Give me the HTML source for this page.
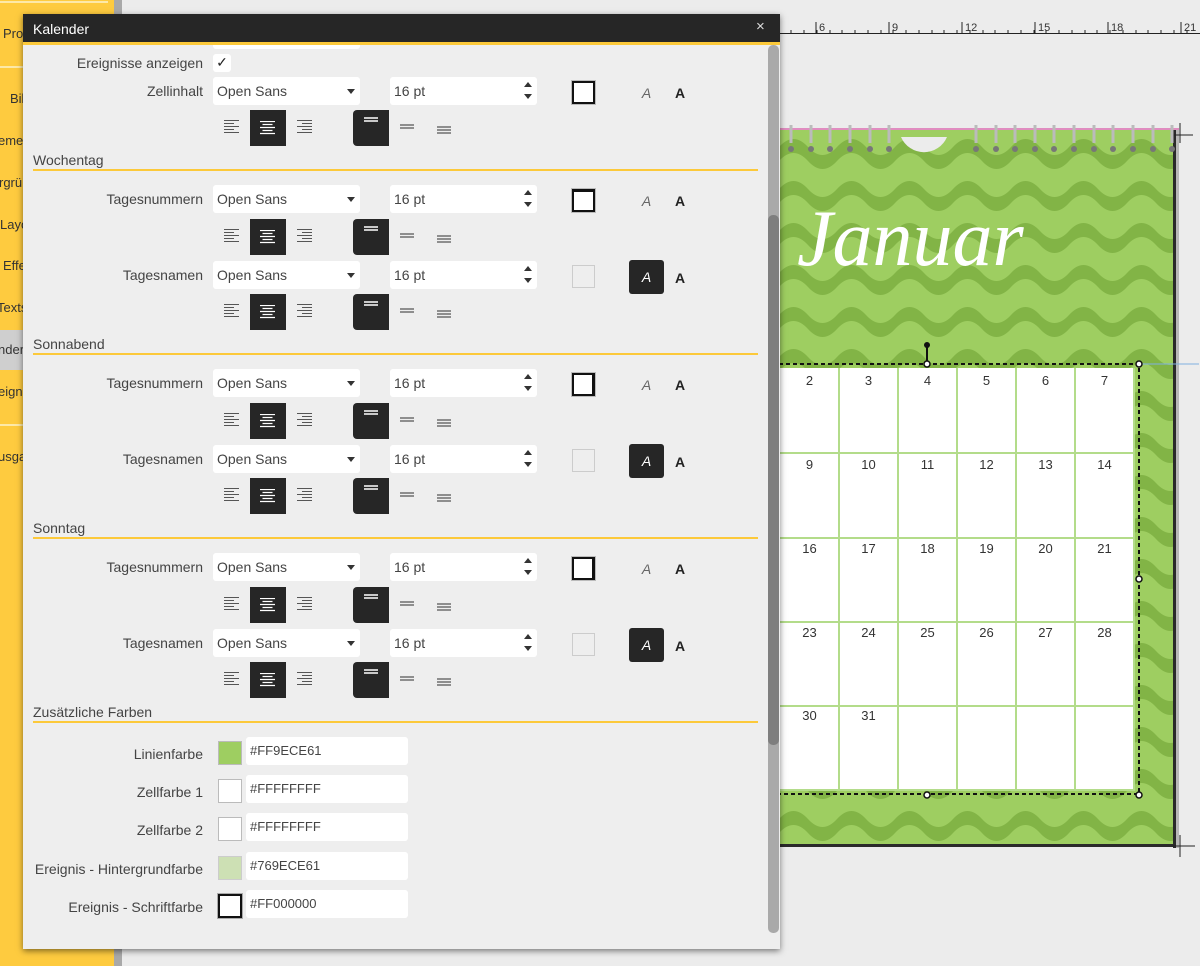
<!DOCTYPE html>
<html><head><meta charset="utf-8"><style>
*{margin:0;padding:0;box-sizing:border-box}
body{width:1200px;height:966px;background:#ececec;position:relative;overflow:hidden;font-family:"Liberation Sans",sans-serif;color:#444}
.a{position:absolute}
.side{left:0;top:0;width:114px;height:966px;background:#fecb3f}
.sb{position:absolute;font-size:13px;color:#333;white-space:nowrap}
.lbl{position:absolute;left:23px;width:180px;text-align:right;font-size:14px;color:#444}
.dd,.sz{position:absolute;height:28px;background:#fff;border-radius:3px;font-size:14px;color:#444;padding:6px 0 0 4px}
.dd{left:213px;width:147px}
.sz{left:390px;width:147px}
.dd:after{content:"";position:absolute;right:5px;top:12px;border-left:4px solid transparent;border-right:4px solid transparent;border-top:5px solid #333}
.sp{position:absolute;right:5px;width:0;height:0;border-left:4px solid transparent;border-right:4px solid transparent}
.sw{position:absolute;left:572px;width:23px;height:23px}
.sel{background:#fff;border:2px solid #111;box-shadow:0 0 0 1px #bbb}
.emp{background:#eee;border:1px solid #ccc}
.ai{position:absolute;left:629px;width:35px;height:34px;font-style:italic;font-size:14px;text-align:center;padding-top:9px;color:#666;border-radius:3px}
.ai.on{background:#262626;color:#fff}
.ab{position:absolute;left:675px;font-weight:bold;font-size:14px;color:#222}
.btn{position:absolute;width:36px;height:36px;background:#262626}
.hd{position:absolute;left:33px;font-size:14px;color:#444}
.hl{position:absolute;left:33px;width:725px;height:2px;background:#fcc93a}
.ic{position:absolute}
.cf{position:absolute;left:218px;width:24px;height:24px}
.ci{position:absolute;left:246px;width:162px;height:28px;background:#fff;border-radius:3px;font-size:13px;padding:6px 0 0 4px;color:#444}
.cell{position:absolute;font-size:13px;color:#333;text-align:center;width:59px}
</style></head><body>

<!-- sidebar -->
<div class="a side">
<div class="a" style="left:0;top:1px;width:108px;height:2px;background:#fde9a8"></div>
<div class="a" style="left:0;top:66px;width:108px;height:2px;background:#fde9a8"></div>
<div class="a" style="left:0;top:330px;width:114px;height:40px;background:#cfcfcf"></div>
<div class="a" style="left:0;top:424px;width:108px;height:2px;background:#fde9a8"></div>
<span class="sb" style="left:3px;top:26px">Projekt</span>
<span class="sb" style="left:10px;top:91px">Bilder</span>
<span class="sb" style="left:-2px;top:133px">emente</span>
<span class="sb" style="left:-1px;top:175px">rgründe</span>
<span class="sb" style="left:0;top:217px">Layouts</span>
<span class="sb" style="left:3px;top:258px">Effekte</span>
<span class="sb" style="left:-3px;top:300px">Texts</span>
<span class="sb" style="left:-2px;top:342px">nder</span>
<span class="sb" style="left:-2px;top:384px">eignisse</span>
<span class="sb" style="left:-2px;top:449px">usgabe</span>
</div>
<div class="a" style="left:114px;top:0;width:8px;height:966px;background:#a9a9a9"></div>

<!-- ruler -->
<div class="a" style="left:779px;top:33px;width:421px;height:1px;background:#222"></div>
<svg class="a" style="left:779px;top:20px" width="421" height="14">
<g stroke="#222" stroke-width="1">
<path d="M12 13v-3M25 13v-3M38 13v-3M51 13v-3M63 13v-3M76 13v-3M89 13v-3M102 13v-3M114 13v-3M127 13v-3M140 13v-3M153 13v-3M165 13v-3M178 13v-3M191 13v-3M204 13v-3M216 13v-3M229 13v-3M242 13v-3M255 13v-3M267 13v-3M280 13v-3M293 13v-3M306 13v-3M318 13v-3M331 13v-3M344 13v-3M357 13v-3M369 13v-3M382 13v-3M395 13v-3M408 13v-3"/>
<path d="M37 13v-11M110 13v-11M183 13v-11M256 13v-11M329 13v-11M402 13v-11"/>
</g>
<g font-size="11" fill="#333" font-family="Liberation Sans"><text x="40" y="11">6</text><text x="113" y="11">9</text><text x="186" y="11">12</text><text x="259" y="11">15</text><text x="332" y="11">18</text><text x="405" y="11">21</text></g>
</svg>

<!-- calendar -->
<svg class="a" style="left:779px;top:115px" width="421" height="750">
<defs>
<pattern id="w" width="58" height="42" patternUnits="userSpaceOnUse" y="14">
<rect width="58" height="42" fill="#9ece61"/>
<path d="M0 18 Q14.5 2 29 18 T58 18 V32 Q43.5 48 29 32 T0 32Z" fill="#82b446"/>
</pattern>
</defs>
<rect x="0" y="15" width="396" height="716" fill="url(#w)"/>
<rect x="0" y="13" width="400" height="2" fill="#e08dc0"/>
<rect x="394" y="15" width="3" height="718" fill="#2a2a2a"/>
<rect x="0" y="729" width="397" height="3" fill="#2a2a2a"/>
<rect x="397" y="15" width="3" height="718" fill="#b8b8b8"/>
<path d="M394 20h20M401 8v20M394 731h22M401 720v22" stroke="#222" stroke-width="1"/>
<path d="M122 22 A25 25 0 0 0 168 22Z" fill="#ececec"/>
<g fill="none" stroke="#bbb" stroke-width="3">
<path d="M12 28v-18M32 28v-18M51 28v-18M71 28v-18M91 28v-18M110 28v-18M197 28v-18M217 28v-18M236 28v-18M256 28v-18M275 28v-18M295 28v-18M315 28v-18M334 28v-18M354 28v-18M374 28v-18M393 28v-18"/>
</g>
<g fill="#777"><circle cx="12" cy="34" r="3"/><circle cx="32" cy="34" r="3"/><circle cx="51" cy="34" r="3"/><circle cx="71" cy="34" r="3"/><circle cx="91" cy="34" r="3"/><circle cx="110" cy="34" r="3"/><circle cx="197" cy="34" r="3"/><circle cx="217" cy="34" r="3"/><circle cx="236" cy="34" r="3"/><circle cx="256" cy="34" r="3"/><circle cx="275" cy="34" r="3"/><circle cx="295" cy="34" r="3"/><circle cx="315" cy="34" r="3"/><circle cx="334" cy="34" r="3"/><circle cx="354" cy="34" r="3"/><circle cx="374" cy="34" r="3"/><circle cx="393" cy="34" r="3"/></g>
<text x="18" y="150" font-family="Liberation Serif" font-style="italic" font-size="80" fill="#fff">Januar</text>
<rect x="0" y="253" width="355" height="423" fill="#fff"/>
<g stroke="#b3dc8a" stroke-width="2">
<path d="M60 253v423M119 253v423M178 253v423M237 253v423M296 253v423M355 253v423"/>
<path d="M0 338h355M0 423h355M0 507h355M0 591h355M0 675h355"/>
</g>
<path d="M0 249h360v430H0" fill="none" stroke="#111" stroke-width="2" stroke-dasharray="4 3"/>
<path d="M360 249h60" stroke="#7fb0e0" stroke-width="1"/>
<path d="M148 249v-18" stroke="#111" stroke-width="2"/>
<circle cx="148" cy="230" r="3" fill="#111"/>
<g fill="#fff" stroke="#111" stroke-width="1.5"><circle cx="148" cy="249" r="3"/><circle cx="360" cy="249" r="3"/><circle cx="360" cy="464" r="3"/><circle cx="148" cy="680" r="3"/><circle cx="360" cy="680" r="3"/></g>
</svg>
<div class="cell" style="left:780px;top:373px">2</div><div class="cell" style="left:839px;top:373px">3</div><div class="cell" style="left:898px;top:373px">4</div><div class="cell" style="left:957px;top:373px">5</div><div class="cell" style="left:1016px;top:373px">6</div><div class="cell" style="left:1075px;top:373px">7</div>
<div class="cell" style="left:780px;top:457px">9</div><div class="cell" style="left:839px;top:457px">10</div><div class="cell" style="left:898px;top:457px">11</div><div class="cell" style="left:957px;top:457px">12</div><div class="cell" style="left:1016px;top:457px">13</div><div class="cell" style="left:1075px;top:457px">14</div>
<div class="cell" style="left:780px;top:541px">16</div><div class="cell" style="left:839px;top:541px">17</div><div class="cell" style="left:898px;top:541px">18</div><div class="cell" style="left:957px;top:541px">19</div><div class="cell" style="left:1016px;top:541px">20</div><div class="cell" style="left:1075px;top:541px">21</div>
<div class="cell" style="left:780px;top:625px">23</div><div class="cell" style="left:839px;top:625px">24</div><div class="cell" style="left:898px;top:625px">25</div><div class="cell" style="left:957px;top:625px">26</div><div class="cell" style="left:1016px;top:625px">27</div><div class="cell" style="left:1075px;top:625px">28</div>
<div class="cell" style="left:780px;top:708px">30</div><div class="cell" style="left:839px;top:708px">31</div>

<!-- dialog -->
<div class="a" style="left:23px;top:14px;width:757px;height:935px;background:#eeeeee;box-shadow:0 2px 6px rgba(0,0,0,.5)"></div>
<div class="a" style="left:23px;top:14px;width:757px;height:28px;background:#262626"></div>
<div class="a" style="left:33px;top:21px;color:#fff;font-size:14px">Kalender</div>
<div class="a" style="left:756px;top:18px;color:#ddd;font-size:15px">×</div>
<div class="a" style="left:23px;top:42px;width:757px;height:3px;background:#fcc93a"></div>
<div class="a" style="left:768px;top:45px;width:11px;height:888px;background:#a9a9a9;border-radius:5px"></div>
<div class="a" style="left:768px;top:215px;width:11px;height:530px;background:#7e7e7e;border-radius:5px"></div>
<div class="a" style="left:213px;top:45px;width:147px;height:4px;background:#fff;border-radius:0 0 3px 3px"></div>

<svg width="0" height="0" style="position:absolute">
<defs>
<g id="al"><path d="M0 .5h15M0 3.5h10M0 6.5h15M0 9.5h10M0 12.5h15" stroke="#555" stroke-width="1"/></g>
<g id="ac"><path d="M0 .5h15M2.5 3.5h10M0 6.5h15M2.5 9.5h10M0 12.5h15" stroke="#fff" stroke-width="1.2"/></g>
<g id="ar"><path d="M0 .5h15M5 3.5h10M0 6.5h15M5 9.5h10M0 12.5h15" stroke="#555" stroke-width="1"/></g>
</defs>
</svg>

<div class="lbl" style="top:55px">Ereignisse anzeigen</div>
<div class="a" style="left:213px;top:54px;width:18px;height:18px;background:#fff;border-radius:3px;font-size:14px;text-align:center;color:#222">✓</div>

<div class="lbl" style="top:83px">Zellinhalt</div>
<div class="dd" style="top:77px">Open Sans</div>
<div class="sz" style="top:77px">16 pt<i class="sp" style="top:5px;border-bottom:5px solid #333"></i><i class="sp" style="top:17px;border-top:5px solid #333"></i></div>
<div class="sw sel" style="top:81px"></div>
<div class="ai" style="top:76px">A</div><div class="ab" style="top:85px">A</div>

<div class="a" style="left:0;top:110px">
<svg class="ic" style="left:224px;top:10px" width="16" height="14"><use href="#al"/></svg>
<div class="btn" style="left:250px;top:0"></div>
<svg class="ic" style="left:260px;top:11px" width="16" height="14"><use href="#ac"/></svg>
<svg class="ic" style="left:297px;top:10px" width="16" height="14"><use href="#ar"/></svg>
<div class="btn" style="left:353px;top:0;border-radius:4px 0 0 4px"></div>
<svg class="ic" style="left:364px;top:7px" width="14" height="8"><path d="M0 1h14M0 4h14" stroke="#fff" stroke-width="1.5"/></svg>
<svg class="ic" style="left:400px;top:14px" width="14" height="8"><path d="M0 1h14M0 4h14" stroke="#555" stroke-width="1.2"/></svg>
<svg class="ic" style="left:437px;top:16px" width="14" height="10"><path d="M0 1h14M0 4h14M0 7h14" stroke="#555" stroke-width="1.2"/></svg>
</div>

<div class="hd" style="top:152px">Wochentag</div><div class="hl" style="top:169px"></div>

<div class="lbl" style="top:191px">Tagesnummern</div>
<div class="dd" style="top:185px">Open Sans</div>
<div class="sz" style="top:185px">16 pt<i class="sp" style="top:5px;border-bottom:5px solid #333"></i><i class="sp" style="top:17px;border-top:5px solid #333"></i></div>
<div class="sw sel" style="top:189px;border-top-width:3px"></div>
<div class="ai" style="top:184px">A</div><div class="ab" style="top:193px">A</div>
<div class="a" style="left:0;top:219px">
<svg class="ic" style="left:224px;top:10px" width="16" height="14"><use href="#al"/></svg>
<div class="btn" style="left:250px;top:0"></div>
<svg class="ic" style="left:260px;top:11px" width="16" height="14"><use href="#ac"/></svg>
<svg class="ic" style="left:297px;top:10px" width="16" height="14"><use href="#ar"/></svg>
<div class="btn" style="left:353px;top:0;border-radius:4px 0 0 4px"></div>
<svg class="ic" style="left:364px;top:7px" width="14" height="8"><path d="M0 1h14M0 4h14" stroke="#fff" stroke-width="1.5"/></svg>
<svg class="ic" style="left:400px;top:14px" width="14" height="8"><path d="M0 1h14M0 4h14" stroke="#555" stroke-width="1.2"/></svg>
<svg class="ic" style="left:437px;top:16px" width="14" height="10"><path d="M0 1h14M0 4h14M0 7h14" stroke="#555" stroke-width="1.2"/></svg>
</div>

<div class="lbl" style="top:267px">Tagesnamen</div>
<div class="dd" style="top:261px">Open Sans</div>
<div class="sz" style="top:261px">16 pt<i class="sp" style="top:5px;border-bottom:5px solid #333"></i><i class="sp" style="top:17px;border-top:5px solid #333"></i></div>
<div class="sw emp" style="top:265px"></div>
<div class="ai on" style="top:260px">A</div><div class="ab" style="top:270px">A</div>
<div class="a" style="left:0;top:294px">
<svg class="ic" style="left:224px;top:10px" width="16" height="14"><use href="#al"/></svg>
<div class="btn" style="left:250px;top:0"></div>
<svg class="ic" style="left:260px;top:11px" width="16" height="14"><use href="#ac"/></svg>
<svg class="ic" style="left:297px;top:10px" width="16" height="14"><use href="#ar"/></svg>
<div class="btn" style="left:353px;top:0;border-radius:4px 0 0 4px"></div>
<svg class="ic" style="left:364px;top:7px" width="14" height="8"><path d="M0 1h14M0 4h14" stroke="#fff" stroke-width="1.5"/></svg>
<svg class="ic" style="left:400px;top:14px" width="14" height="8"><path d="M0 1h14M0 4h14" stroke="#555" stroke-width="1.2"/></svg>
<svg class="ic" style="left:437px;top:16px" width="14" height="10"><path d="M0 1h14M0 4h14M0 7h14" stroke="#555" stroke-width="1.2"/></svg>
</div>

<div class="hd" style="top:336px">Sonnabend</div><div class="hl" style="top:353px"></div>

<div class="lbl" style="top:375px">Tagesnummern</div>
<div class="dd" style="top:369px">Open Sans</div>
<div class="sz" style="top:369px">16 pt<i class="sp" style="top:5px;border-bottom:5px solid #333"></i><i class="sp" style="top:17px;border-top:5px solid #333"></i></div>
<div class="sw sel" style="top:373px;border-right-width:3px"></div>
<div class="ai" style="top:368px">A</div><div class="ab" style="top:377px">A</div>
<div class="a" style="left:0;top:403px">
<svg class="ic" style="left:224px;top:10px" width="16" height="14"><use href="#al"/></svg>
<div class="btn" style="left:250px;top:0"></div>
<svg class="ic" style="left:260px;top:11px" width="16" height="14"><use href="#ac"/></svg>
<svg class="ic" style="left:297px;top:10px" width="16" height="14"><use href="#ar"/></svg>
<div class="btn" style="left:353px;top:0;border-radius:4px 0 0 4px"></div>
<svg class="ic" style="left:364px;top:7px" width="14" height="8"><path d="M0 1h14M0 4h14" stroke="#fff" stroke-width="1.5"/></svg>
<svg class="ic" style="left:400px;top:14px" width="14" height="8"><path d="M0 1h14M0 4h14" stroke="#555" stroke-width="1.2"/></svg>
<svg class="ic" style="left:437px;top:16px" width="14" height="10"><path d="M0 1h14M0 4h14M0 7h14" stroke="#555" stroke-width="1.2"/></svg>
</div>

<div class="lbl" style="top:451px">Tagesnamen</div>
<div class="dd" style="top:445px">Open Sans</div>
<div class="sz" style="top:445px">16 pt<i class="sp" style="top:5px;border-bottom:5px solid #333"></i><i class="sp" style="top:17px;border-top:5px solid #333"></i></div>
<div class="sw emp" style="top:449px"></div>
<div class="ai on" style="top:444px">A</div><div class="ab" style="top:454px">A</div>
<div class="a" style="left:0;top:478px">
<svg class="ic" style="left:224px;top:10px" width="16" height="14"><use href="#al"/></svg>
<div class="btn" style="left:250px;top:0"></div>
<svg class="ic" style="left:260px;top:11px" width="16" height="14"><use href="#ac"/></svg>
<svg class="ic" style="left:297px;top:10px" width="16" height="14"><use href="#ar"/></svg>
<div class="btn" style="left:353px;top:0;border-radius:4px 0 0 4px"></div>
<svg class="ic" style="left:364px;top:7px" width="14" height="8"><path d="M0 1h14M0 4h14" stroke="#fff" stroke-width="1.5"/></svg>
<svg class="ic" style="left:400px;top:14px" width="14" height="8"><path d="M0 1h14M0 4h14" stroke="#555" stroke-width="1.2"/></svg>
<svg class="ic" style="left:437px;top:16px" width="14" height="10"><path d="M0 1h14M0 4h14M0 7h14" stroke="#555" stroke-width="1.2"/></svg>
</div>

<div class="hd" style="top:520px">Sonntag</div><div class="hl" style="top:537px"></div>

<div class="lbl" style="top:559px">Tagesnummern</div>
<div class="dd" style="top:553px">Open Sans</div>
<div class="sz" style="top:553px">16 pt<i class="sp" style="top:5px;border-bottom:5px solid #333"></i><i class="sp" style="top:17px;border-top:5px solid #333"></i></div>
<div class="sw sel" style="top:557px;border-right-width:3px"></div>
<div class="ai" style="top:552px">A</div><div class="ab" style="top:561px">A</div>
<div class="a" style="left:0;top:587px">
<svg class="ic" style="left:224px;top:10px" width="16" height="14"><use href="#al"/></svg>
<div class="btn" style="left:250px;top:0"></div>
<svg class="ic" style="left:260px;top:11px" width="16" height="14"><use href="#ac"/></svg>
<svg class="ic" style="left:297px;top:10px" width="16" height="14"><use href="#ar"/></svg>
<div class="btn" style="left:353px;top:0;border-radius:4px 0 0 4px"></div>
<svg class="ic" style="left:364px;top:7px" width="14" height="8"><path d="M0 1h14M0 4h14" stroke="#fff" stroke-width="1.5"/></svg>
<svg class="ic" style="left:400px;top:14px" width="14" height="8"><path d="M0 1h14M0 4h14" stroke="#555" stroke-width="1.2"/></svg>
<svg class="ic" style="left:437px;top:16px" width="14" height="10"><path d="M0 1h14M0 4h14M0 7h14" stroke="#555" stroke-width="1.2"/></svg>
</div>

<div class="lbl" style="top:635px">Tagesnamen</div>
<div class="dd" style="top:629px">Open Sans</div>
<div class="sz" style="top:629px">16 pt<i class="sp" style="top:5px;border-bottom:5px solid #333"></i><i class="sp" style="top:17px;border-top:5px solid #333"></i></div>
<div class="sw emp" style="top:633px"></div>
<div class="ai on" style="top:628px">A</div><div class="ab" style="top:638px">A</div>
<div class="a" style="left:0;top:662px">
<svg class="ic" style="left:224px;top:10px" width="16" height="14"><use href="#al"/></svg>
<div class="btn" style="left:250px;top:0"></div>
<svg class="ic" style="left:260px;top:11px" width="16" height="14"><use href="#ac"/></svg>
<svg class="ic" style="left:297px;top:10px" width="16" height="14"><use href="#ar"/></svg>
<div class="btn" style="left:353px;top:0;border-radius:4px 0 0 4px"></div>
<svg class="ic" style="left:364px;top:7px" width="14" height="8"><path d="M0 1h14M0 4h14" stroke="#fff" stroke-width="1.5"/></svg>
<svg class="ic" style="left:400px;top:14px" width="14" height="8"><path d="M0 1h14M0 4h14" stroke="#555" stroke-width="1.2"/></svg>
<svg class="ic" style="left:437px;top:16px" width="14" height="10"><path d="M0 1h14M0 4h14M0 7h14" stroke="#555" stroke-width="1.2"/></svg>
</div>

<div class="hd" style="top:704px">Zusätzliche Farben</div><div class="hl" style="top:721px"></div>

<div class="lbl" style="top:746px">Linienfarbe</div>
<div class="cf" style="top:741px;background:#9ece61;border:1px solid #bbb"></div>
<div class="ci" style="top:737px">#FF9ECE61</div>
<div class="lbl" style="top:784px">Zellfarbe 1</div>
<div class="cf" style="top:779px;background:#fff;border:1px solid #bbb"></div>
<div class="ci" style="top:775px">#FFFFFFFF</div>
<div class="lbl" style="top:822px">Zellfarbe 2</div>
<div class="cf" style="top:817px;background:#fff;border:1px solid #bbb"></div>
<div class="ci" style="top:813px">#FFFFFFFF</div>
<div class="lbl" style="top:861px">Ereignis - Hintergrundfarbe</div>
<div class="cf" style="top:856px;background:#cde0b4;border:1px solid #ccc"></div>
<div class="ci" style="top:852px">#769ECE61</div>
<div class="lbl" style="top:899px">Ereignis - Schriftfarbe</div>
<div class="cf" style="top:894px;background:#fff;border:2px solid #111;box-shadow:0 0 0 1px #aaa"></div>
<div class="ci" style="top:890px">#FF000000</div>
</body></html>
